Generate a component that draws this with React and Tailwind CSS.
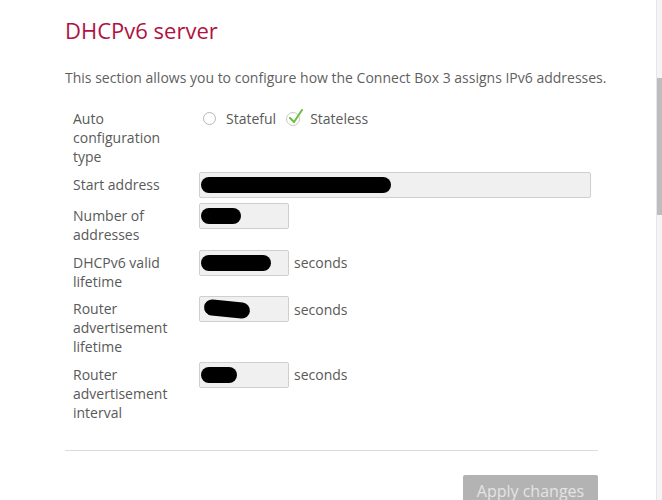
import React from "react";

// DHCPv6 server settings panel
const font = { fontFamily: "'Open Sans', Lato, sans-serif" };

function Blob({ w = 80, rotate = "" }) {
  return <span className={"block h-[16px] rounded-full bg-black " + rotate} style={{ width: w }} />;
}

function Field({ label, children }) {
  return (
    <div className="flex items-start">
      <div className="w-[134px] shrink-0 pl-[8px] pr-2 pt-[3px] text-[14px] leading-[19px] text-[#595959]">{label}</div>
      <div className="flex items-center">{children}</div>
    </div>
  );
}

function SmallInput({ blob, seconds }) {
  return (
    <>
      <div className="flex h-[26px] w-[90px] items-center rounded-[2px] border border-[#cfcfcf] bg-[#f0f0f0] pl-[1px]">
        {blob}
      </div>
      {seconds && <span className="ml-[5px] text-[14px] text-[#595959]">seconds</span>}
    </>
  );
}

export default function App() {
  return (
    <div className="relative min-h-[500px] overflow-hidden bg-white" style={font}>
      <div className="ml-[65px] w-[533px] pt-[16px]">
        <h1 className="text-[22px] leading-[28px] text-[#b0123f]">DHCPv6 server</h1>
        <p className="mt-[24px] text-[14px] leading-[19px] text-[#5f5f5f] whitespace-nowrap">
          This section allows you to configure how the Connect Box 3 assigns IPv6 addresses.
        </p>

        <div className="mt-[19px] flex flex-col gap-[5.5px]">
          <Field label={<>Auto<br />configuration<br />type</>}>
            <div className="flex items-center pt-[3px] text-[14px] leading-[19px] text-[#595959]">
              <span className="ml-[4px] h-[13px] w-[13px] rounded-full border border-[#b8b8b8] bg-white" />
              <span className="ml-[10px]">Stateful</span>
              <span className="relative ml-[10px] h-[14px] w-[14px] rounded-full border border-[#c8c8c8] bg-white">
                <svg viewBox="0 0 16 16" className="absolute left-[1px] top-[-4px] h-[16px] w-[16px]">
                  <path d="M2 9 L6 13 L14 1" fill="none" stroke="#6cbf3a" strokeWidth="2" strokeLinecap="round" strokeLinejoin="round" />
                </svg>
              </span>
              <span className="ml-[10px]">Stateless</span>
            </div>
          </Field>

          <Field label="Start address">
            <div className="flex h-[26px] w-[392px] items-center rounded-[2px] border border-[#cfcfcf] bg-[#f0f0f0] pl-[1px]">
              <Blob w={190} />
            </div>
          </Field>

          <Field label={<>Number of<br />addresses</>}>
            <SmallInput blob={<Blob w={40} />} />
          </Field>

          <Field label={<>DHCPv6 valid<br />lifetime</>}>
            <SmallInput blob={<Blob w={70} />} seconds />
          </Field>

          <Field label={<>Router<br />advertisement<br />lifetime</>}>
            <SmallInput blob={<Blob w={46} rotate="rotate-[6deg] ml-[3px]" />} seconds />
          </Field>

          <Field label={<>Router<br />advertisement<br />interval</>}>
            <SmallInput blob={<Blob w={36} />} seconds />
          </Field>
        </div>

        <div className="mt-[28px] h-px bg-[#dcdcdc]" />

        <div className="mt-[24px] flex justify-end">
          <button className="h-[30px] w-[135px] rounded-[2px] bg-[#b3b3b3] pt-[3px] text-[16px] text-[#e4e4e4]">Apply changes</button>
        </div>
      </div>

      {/* fake scrollbar */}
      <div className="absolute right-0 top-0 h-[500px] w-[6px] border-l border-[#e6e6e6] bg-[#f4f4f4]">
        <div className="mt-[78px] h-[137px] w-[5px] bg-[#bdbdbd]" />
      </div>
    </div>
  );
}
